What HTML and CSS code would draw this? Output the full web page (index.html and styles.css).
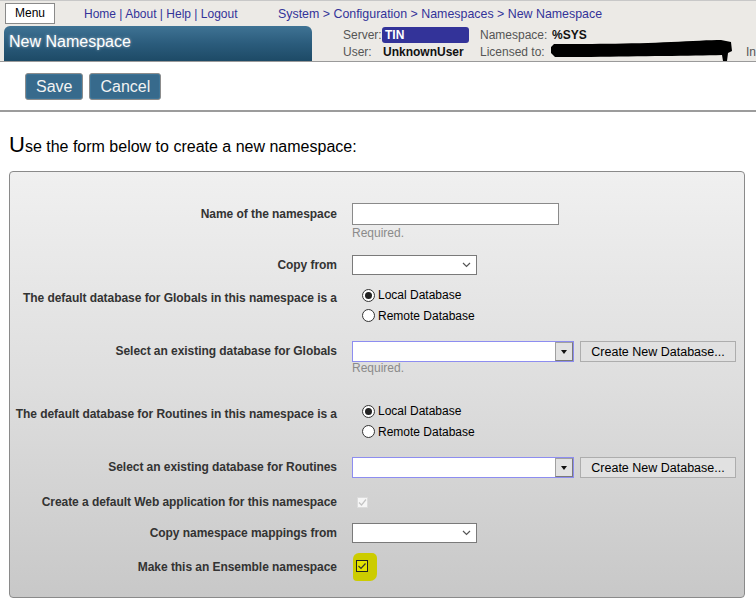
FILE: index.html
```html
<!DOCTYPE html>
<html>
<head>
<meta charset="utf-8">
<title>New Namespace</title>
<link rel="stylesheet" href="styles.css">
</head>
<body>
<div class="header">
  <div class="top-row">
    <div class="menu-btn">Menu</div>
    <div class="links"><a>Home</a> | <a>About</a> | <a>Help</a> | <a>Logout</a></div>
    <div class="crumbs"><a>System</a> &gt; <a>Configuration</a> &gt; <a>Namespaces</a> &gt; <a>New Namespace</a></div>
  </div>
  <div class="second-row">
    <div class="title-bar">New Namespace</div>
    <div class="info">
      <span class="lbl">Server:</span>
      <span class="server">TIN</span>
      <span class="lbl">Namespace:</span>
      <span class="val">%SYS</span>
      <span></span>
      <span class="lbl">User:</span>
      <span class="val user">UnknownUser</span>
      <span class="lbl">Licensed to:</span>
      <span class="redact"><svg width="182" height="24" viewBox="0 0 182 24"><path d="M0,8 L3,5 C30,5 80,5 120,3 C140,2 160,1 170,1 L180,3 L181,12 L177,14 L176,22 L172,22 L171,16 C140,17 90,17 40,18 L4,18 L0,14 Z" fill="#000"/></svg></span>
      <span class="lbl">In</span>
    </div>
  </div>
</div>

<div class="actions">
  <button class="btn">Save</button>
  <button class="btn">Cancel</button>
</div>

<p class="intro"><span class="big">U</span>se the form below to create a new namespace:</p>

<div class="form-box">
  <div class="row r1">
    <div class="label h22">Name of the namespace</div>
    <div class="ctl">
      <div class="text-input"></div>
      <div class="req">Required.</div>
    </div>
  </div>

  <div class="row r2">
    <div class="label h20">Copy from</div>
    <div class="ctl">
      <div class="select"><svg class="chev" width="9" height="6" viewBox="0 0 9 6"><path d="M1,1 L4.5,4.5 L8,1" fill="none" stroke="#555" stroke-width="1.2"/></svg></div>
    </div>
  </div>

  <div class="row r3">
    <div class="label h20 pad3">The default database for Globals in this namespace is a</div>
    <div class="ctl radios">
      <div class="radio-line"><span class="radio on"></span>Local Database</div>
      <div class="radio-line"><span class="radio"></span>Remote Database</div>
    </div>
  </div>

  <div class="row r4">
    <div class="label h21">Select an existing database for Globals</div>
    <div class="ctl">
      <div class="combo-line">
        <div class="combo"><div class="combo-field"></div><div class="combo-btn"><span class="tri"></span></div></div>
        <button class="create-btn">Create New Database...</button>
      </div>
      <div class="req req-tight">Required.</div>
    </div>
  </div>

  <div class="row r5">
    <div class="label h20 pad3">The default database for Routines in this namespace is a</div>
    <div class="ctl radios">
      <div class="radio-line"><span class="radio on"></span>Local Database</div>
      <div class="radio-line"><span class="radio"></span>Remote Database</div>
    </div>
  </div>

  <div class="row r6">
    <div class="label h20">Select an existing database for Routines</div>
    <div class="ctl">
      <div class="combo-line">
        <div class="combo"><div class="combo-field"></div><div class="combo-btn"><span class="tri"></span></div></div>
        <button class="create-btn">Create New Database...</button>
      </div>
    </div>
  </div>

  <div class="row r7">
    <div class="label h20">Create a default Web application for this namespace</div>
    <div class="ctl check-cell">
      <span class="cb-disabled"><svg width="9" height="9" viewBox="0 0 9 9"><path d="M1,4.5 L3.5,7 L8,1.5" fill="none" stroke="#c4c4c4" stroke-width="1.2"/></svg></span>
    </div>
  </div>

  <div class="row r8">
    <div class="label h20">Copy namespace mappings from</div>
    <div class="ctl">
      <div class="select"><svg class="chev" width="9" height="6" viewBox="0 0 9 6"><path d="M1,1 L4.5,4.5 L8,1" fill="none" stroke="#555" stroke-width="1.2"/></svg></div>
    </div>
  </div>

  <div class="row r9">
    <div class="label h28">Make this an Ensemble namespace</div>
    <div class="ctl">
      <div class="highlight"><span class="cb-yellow"><svg width="10" height="10" viewBox="0 0 10 10"><path d="M1.5,5 L4,7.5 L8.5,2.5" fill="none" stroke="#333" stroke-width="1.2"/></svg></span></div>
    </div>
  </div>
</div>
</body>
</html>
```

FILE: styles.css
```css
html, body {
  margin: 0;
  padding: 0;
  background: #ffffff;
}
body {
  width: 756px;
  height: 609px;
  overflow: hidden;
  font-family: "Liberation Sans", Arial, sans-serif;
  color: #000;
}

/* ---------- header ---------- */
.header {
  background: #eceae6;
  height: 60px;
  border-top: 1px solid #c8c8c8;
  border-bottom: 1px solid #9a9a9a;
}
.top-row {
  height: 25px;
  display: flex;
  align-items: center;
}
.menu-btn {
  margin-left: 5px;
  width: 50px;
  height: 21px;
  box-sizing: border-box;
  background: #fff;
  border: 1px solid #8a8a8a;
  font-size: 12px;
  line-height: 19px;
  text-align: center;
  color: #000;
}
.links {
  margin-left: 29px;
  width: 194px;
  font-size: 12px;
  color: #333399;
}
.crumbs {
  font-size: 12.4px;
  color: #333399;
}
.links a, .crumbs a {
  color: #333399;
  text-decoration: none;
}
.second-row {
  display: flex;
  height: 35px;
}
.title-bar {
  margin-left: 4px;
  width: 309px;
  height: 35px;
  box-sizing: border-box;
  border-radius: 6px 6px 0 0;
  background: linear-gradient(to bottom, #3f7394 0%, #2b5c7c 50%, #1d4a66 100%);
  color: #fff;
  font-size: 16px;
  line-height: 20px;
  padding: 6px 0 0 5px;
  text-shadow: 0 0 3px rgba(255,255,255,0.55);
}
.info {
  margin-left: 31px;
  margin-top: 1px;
  display: grid;
  grid-template-columns: 39px 98px 72px 194px auto;
  grid-template-rows: 16px 17px;
  font-size: 12px;
  align-items: center;
}
.lbl {
  color: #555;
}
.val {
  font-weight: bold;
  color: #111;
}
.user {
  padding-left: 1px;
}
.server {
  width: 87px;
  height: 16px;
  box-sizing: border-box;
  background: #333399;
  border-radius: 3px;
  color: #fff;
  font-weight: bold;
  line-height: 16px;
  padding-left: 3px;
}
.redact {
  position: relative;
  height: 17px;
}
.redact svg {
  position: absolute;
  left: -1px;
  top: -4px;
}

/* ---------- action buttons ---------- */
.actions {
  display: flex;
  gap: 6px;
  padding: 11px 0 10px 25px;
  border-bottom: 2px solid #9c9c9c;
}
.btn {
  height: 27px;
  box-sizing: border-box;
  background: #376a8c;
  border: 1px solid #8c8c8c;
  border-radius: 3px;
  color: #f2f2f2;
  font-family: "Liberation Sans", Arial, sans-serif;
  font-size: 16px;
  padding: 0 10px;
  margin: 0;
  box-shadow: inset 0 0 0 1px #3d7497;
}

/* ---------- intro ---------- */
.intro {
  margin: 23px 0 12px 9px;
  height: 24px;
  font-size: 16px;
  line-height: 24px;
  color: #000;
}
.intro .big {
  font-size: 22px;
  line-height: 0;
}

/* ---------- form ---------- */
.form-box {
  margin-left: 9px;
  width: 736px;
  height: 427px;
  box-sizing: border-box;
  border: 1px solid #8a8a8a;
  border-radius: 4px;
  background: linear-gradient(to bottom, #f0f0f0 0%, #dedede 50%, #c8c8c8 100%);
  padding-top: 31px;
}
.row {
  display: flex;
  align-items: flex-start;
}
.r2 { margin-top: 15px; }
.r3 { margin-top: 10px; }
.r4 { margin-top: 15px; }
.r5 { margin-top: 27px; }
.r6 { margin-top: 15px; }
.r7 { margin-top: 14px; }
.r8 { margin-top: 11px; }
.r9 { margin-top: 10px; }

.label {
  width: 327px;
  text-align: right;
  font-size: 12px;
  font-weight: bold;
  color: #333;
  white-space: nowrap;
  letter-spacing: -0.05px;
}
.h20 { line-height: 20px; }
.h21 { line-height: 21px; }
.h22 { line-height: 22px; }
.h28 { line-height: 28px; }
.pad3 { padding-top: 3px; }

.ctl {
  margin-left: 15px;
}
.text-input {
  width: 207px;
  height: 22px;
  box-sizing: border-box;
  background: #fff;
  border: 1px solid #8a8a8a;
}
.req {
  font-size: 12px;
  color: #8a8a8a;
  line-height: 14px;
  margin-top: 1px;
}
.req-tight {
  margin-top: 0;
  line-height: 12px;
}
.select {
  width: 125px;
  height: 20px;
  box-sizing: border-box;
  background: #fff;
  border: 1px solid #7a7a7a;
  display: flex;
  align-items: center;
  justify-content: flex-end;
  padding-right: 5px;
}
.radios {
  padding-left: 10px;
}
.radio-line {
  display: flex;
  align-items: center;
  height: 20px;
  font-size: 12px;
  color: #000;
}
.radio-line + .radio-line {
  height: 21px;
}
.radio {
  width: 13px;
  height: 13px;
  box-sizing: border-box;
  border: 1px solid #333;
  border-radius: 50%;
  background: #fff;
  margin-right: 3px;
  display: flex;
  align-items: center;
  justify-content: center;
}
.radio.on::after {
  content: "";
  width: 7px;
  height: 7px;
  border-radius: 50%;
  background: #222;
}
.combo-line {
  display: flex;
  align-items: center;
  gap: 6px;
}
.combo {
  width: 222px;
  height: 21px;
  box-sizing: border-box;
  border: 1px solid #8d8df0;
  background: #fff;
  display: flex;
}
.combo-field {
  flex: 1;
}
.combo-btn {
  width: 18px;
  box-sizing: border-box;
  background: #e2e2e2;
  border: 1px solid #7a7a7a;
  border-top-color: #a0a0a0;
  border-left-color: #a0a0a0;
  display: flex;
  align-items: center;
  justify-content: center;
}
.tri {
  width: 0;
  height: 0;
  border-left: 3.5px solid transparent;
  border-right: 3.5px solid transparent;
  border-top: 4px solid #111;
}
.create-btn {
  width: 156px;
  height: 21px;
  box-sizing: border-box;
  margin: 0;
  padding: 0;
  background: #e1e1e1;
  border: 1px solid #adadad;
  font-family: "Liberation Sans", Arial, sans-serif;
  font-size: 12.5px;
  color: #000;
}
.check-cell {
  height: 20px;
  display: flex;
  align-items: center;
  padding-left: 5px;
}
.cb-disabled {
  width: 11px;
  height: 11px;
  box-sizing: border-box;
  background: #f6f6f6;
  border: 1px solid #dcdcdc;
  display: flex;
  align-items: center;
  justify-content: center;
}
.highlight {
  margin-left: 1px;
  width: 24px;
  height: 28px;
  box-sizing: border-box;
  background: #cccc00;
  border-radius: 6px 5px 7px 4px;
  padding: 7px 0 0 3px;
}
.cb-yellow {
  width: 12px;
  height: 12px;
  box-sizing: border-box;
  background: #e4e400;
  border: 1px solid #222;
  display: flex;
  align-items: center;
  justify-content: center;
}
```
